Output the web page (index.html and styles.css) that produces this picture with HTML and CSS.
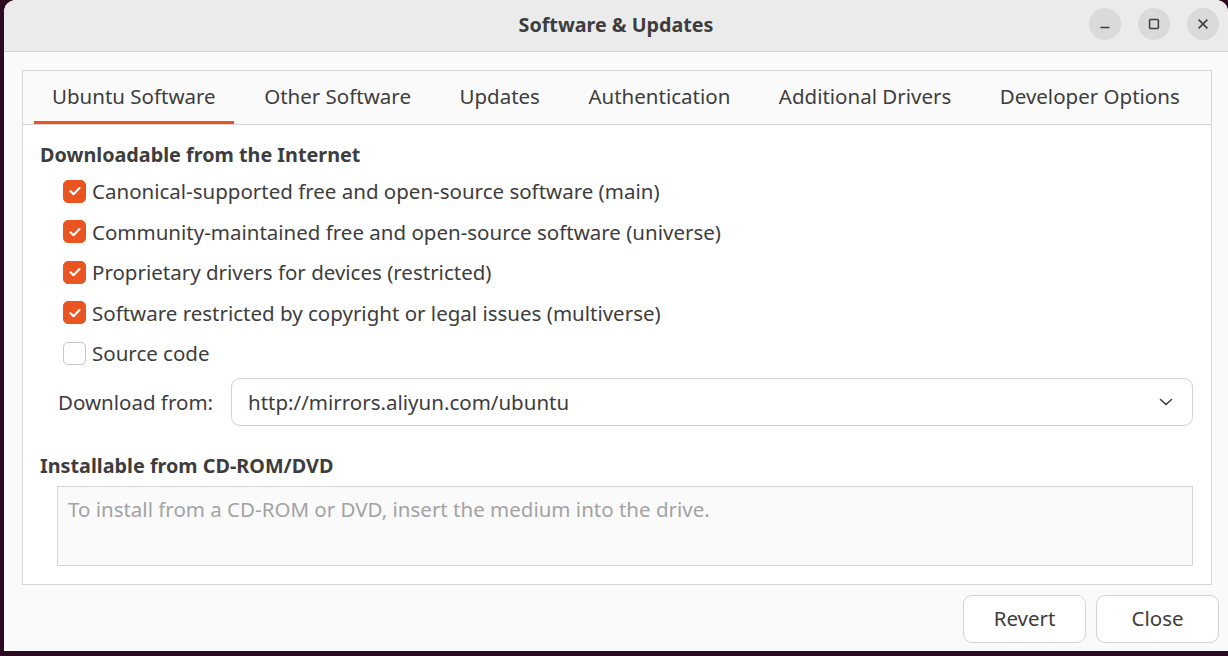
FILE: index.html
```html
<!DOCTYPE html>
<html lang="en">
<head>
<meta charset="utf-8">
<title>Software &amp; Updates</title>
<link rel="stylesheet" href="styles.css">
</head>
<body>
<div class="window">
  <header class="titlebar">
    <div class="tb-spacer"></div>
    <div class="tb-title">Software &amp; Updates</div>
    <div class="tb-controls">
      <span class="wbtn"><svg width="16" height="16" viewBox="0 0 16 16"><path d="M3.5 11.5h9" stroke="#3d3d3d" stroke-width="1.6" fill="none"/></svg></span>
      <span class="wbtn"><svg width="16" height="16" viewBox="0 0 16 16"><rect x="3.6" y="3.6" width="8.8" height="8.8" rx="0.8" stroke="#3d3d3d" stroke-width="1.5" fill="none"/></svg></span>
      <span class="wbtn"><svg width="16" height="16" viewBox="0 0 16 16"><path d="M3.6 3.6l8.8 8.8M12.4 3.6l-8.8 8.8" stroke="#3d3d3d" stroke-width="1.6" fill="none"/></svg></span>
    </div>
  </header>
  <main class="content">
    <section class="notebook">
      <nav class="tabs">
        <span class="tab active">Ubuntu Software</span>
        <span class="tab">Other Software</span>
        <span class="tab">Updates</span>
        <span class="tab">Authentication</span>
        <span class="tab">Additional Drivers</span>
        <span class="tab">Developer Options</span>
      </nav>
      <div class="page">
        <h2 class="heading">Downloadable from the Internet</h2>
        <ul class="checks">
          <li class="check"><span class="box on"><svg width="18" height="18" viewBox="0 0 16 16"><path d="M4 8.3l2.7 2.5 5.3-5.4" stroke="#fff" stroke-width="1.9" fill="none" stroke-linecap="round" stroke-linejoin="round"/></svg></span>Canonical-supported free and open-source software (main)</li>
          <li class="check"><span class="box on"><svg width="18" height="18" viewBox="0 0 16 16"><path d="M4 8.3l2.7 2.5 5.3-5.4" stroke="#fff" stroke-width="1.9" fill="none" stroke-linecap="round" stroke-linejoin="round"/></svg></span>Community-maintained free and open-source software (universe)</li>
          <li class="check"><span class="box on"><svg width="18" height="18" viewBox="0 0 16 16"><path d="M4 8.3l2.7 2.5 5.3-5.4" stroke="#fff" stroke-width="1.9" fill="none" stroke-linecap="round" stroke-linejoin="round"/></svg></span>Proprietary drivers for devices (restricted)</li>
          <li class="check"><span class="box on"><svg width="18" height="18" viewBox="0 0 16 16"><path d="M4 8.3l2.7 2.5 5.3-5.4" stroke="#fff" stroke-width="1.9" fill="none" stroke-linecap="round" stroke-linejoin="round"/></svg></span>Software restricted by copyright or legal issues (multiverse)</li>
          <li class="check"><span class="box"></span>Source code</li>
        </ul>
        <div class="download-row">
          <span class="dl-label">Download from:</span>
          <div class="combo">
            <span class="combo-text">http://mirrors.aliyun.com/ubuntu</span>
            <svg class="chev" width="16" height="16" viewBox="0 0 16 16"><path d="M2.5 5.5l5.5 5 5.5-5" stroke="#3d3d3d" stroke-width="1.6" fill="none" stroke-linecap="round" stroke-linejoin="round"/></svg>
          </div>
        </div>
        <h2 class="heading heading2">Installable from CD-ROM/DVD</h2>
        <div class="cdbox">To install from a CD-ROM or DVD, insert the medium into the drive.</div>
      </div>
    </section>
    <footer class="actions">
      <button class="btn">Revert</button>
      <button class="btn">Close</button>
    </footer>
  </main>
</div>
</body>
</html>
```

FILE: styles.css
```css
* { box-sizing: border-box; }
html, body { margin: 0; padding: 0; }
body {
  background: #2c0b22;
  width: 1228px;
  height: 656px;
  overflow: hidden;
  font-family: "Noto Sans", "Open Sans", sans-serif;
  color: #3d3d3d;
}
.window {
  margin-left: 4px;
  width: 1224px;
  height: 651px;
  background: #fafafa;
  border-radius: 12px 12px 0 0;
  overflow: hidden;
  display: flex;
  flex-direction: column;
}
.titlebar {
  height: 52px;
  flex: none;
  background: #ebebeb;
  border-bottom: 1px solid #d3d3d3;
  display: grid;
  grid-template-columns: 1fr auto 1fr;
  align-items: center;
}
.tb-title {
  font-weight: 700;
  font-size: 19.7px;
  color: #3d3d3d;
  padding-bottom: 2px;
}
.tb-controls {
  display: flex;
  justify-content: flex-end;
  gap: 17px;
  padding-right: 9px;
  padding-bottom: 4px;
}
.wbtn {
  width: 32px;
  height: 32px;
  border-radius: 50%;
  background: #dadada;
  display: flex;
  align-items: center;
  justify-content: center;
}
.content {
  flex: 1;
  display: flex;
  flex-direction: column;
  padding: 18px 9px 9px 18px;
}
.notebook {
  width: 1190px;
  height: 515px;
  border: 1px solid #d6d6d6;
  display: flex;
  flex-direction: column;
  background: #fff;
}
.tabs {
  height: 54px;
  flex: none;
  background: #fafafa;
  border-bottom: 1px solid #d6d6d6;
  display: flex;
  align-items: stretch;
  padding-left: 11px;
  gap: 12.5px;
}
.tab {
  display: flex;
  align-items: center;
  padding: 0 18px 0;
  font-size: 20.5px;
  color: #3d3d3d;
  border-bottom: 3px solid transparent;
}
.tab.active { border-bottom-color: #e95420; }
.page {
  flex: 1;
  padding: 18px 18px 0 17px;
}
.heading {
  margin: 0;
  font-size: 19.8px;
  font-weight: 700;
  line-height: 24px;
  color: #3d3d3d;
}
.checks {
  list-style: none;
  margin: 4px 0 0;
  padding: 0 0 0 23px;
}
.check {
  height: 40.5px;
  display: flex;
  align-items: center;
  font-size: 20.5px;
  color: #3d3d3d;
}
.box {
  width: 23px;
  height: 23px;
  border-radius: 5px;
  margin-right: 6px;
  border: 1px solid #c6c6c6;
  background: #fff;
  display: flex;
  align-items: center;
  justify-content: center;
  flex: none;
}
.box.on {
  background: #e95420;
  border-color: #e95420;
}
.download-row {
  display: flex;
  align-items: center;
  margin-top: 4px;
  padding-left: 18px;
  gap: 18px;
}
.dl-label { font-size: 20.5px; }
.combo {
  flex: 1;
  height: 48px;
  border: 1px solid #d3d3d3;
  border-radius: 9px;
  background: #fff;
  display: flex;
  align-items: center;
  justify-content: space-between;
  padding: 0 18px 0 16px;
  font-size: 20.5px;
}
.chev { flex: none; }
.heading2 { margin-top: 28px; }
.cdbox {
  margin: 8px 0 0 17px;
  width: 1136px;
  height: 80px;
  border: 1px solid #d6d6d6;
  background: #fafafa;
  color: #a3a3a3;
  font-size: 20.5px;
  padding: 8px 10px;
}
.actions {
  display: flex;
  justify-content: flex-end;
  gap: 10px;
  margin-top: 10px;
}
.btn {
  width: 123px;
  height: 48px;
  border: 1px solid #d3d3d3;
  border-radius: 9px;
  background: #fff;
  font-family: inherit;
  font-size: 20.5px;
  color: #3d3d3d;
  padding-bottom: 3px;
}
```
